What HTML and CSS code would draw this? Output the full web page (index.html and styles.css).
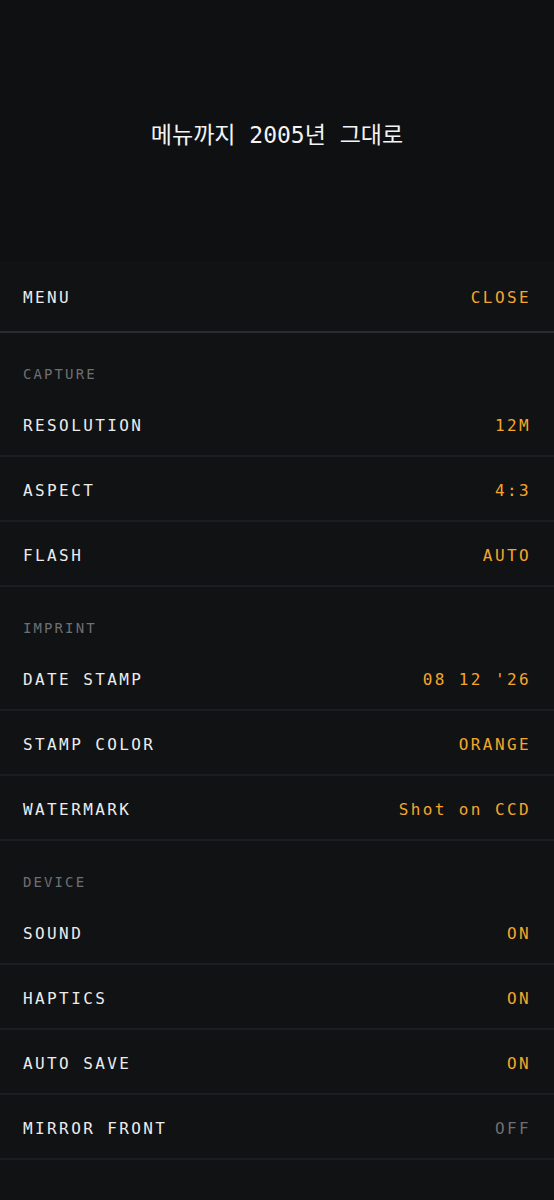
FILE: index.html
```html
<!DOCTYPE html>
<html lang="ko">
<head>
  <meta charset="UTF-8">
  <meta name="viewport" content="width=device-width, initial-scale=1.0">
  <title>메뉴</title>
  <link rel="stylesheet" href="styles.css">
</head>
<body>
  <div class="hero">
    <h1>메뉴까지 2005년 그대로</h1>
  </div>

  <div class="menu">
    <div class="menu-head">
      <span>MENU</span>
      <span class="accent">CLOSE</span>
    </div>

    <!-- CAPTURE -->
    <div class="section-label">CAPTURE</div>
    <div class="row"><span>RESOLUTION</span><span class="accent">12M</span></div>
    <div class="row"><span>ASPECT</span><span class="accent">4:3</span></div>
    <div class="row"><span>FLASH</span><span class="accent">AUTO</span></div>

    <!-- IMPRINT -->
    <div class="section-label">IMPRINT</div>
    <div class="row"><span>DATE STAMP</span><span class="accent">08 12 '26</span></div>
    <div class="row"><span>STAMP COLOR</span><span class="accent">ORANGE</span></div>
    <div class="row"><span>WATERMARK</span><span class="accent">Shot on CCD</span></div>

    <!-- DEVICE -->
    <div class="section-label">DEVICE</div>
    <div class="row"><span>SOUND</span><span class="accent">ON</span></div>
    <div class="row"><span>HAPTICS</span><span class="accent">ON</span></div>
    <div class="row"><span>AUTO SAVE</span><span class="accent">ON</span></div>
    <div class="row"><span>MIRROR FRONT</span><span class="muted">OFF</span></div>
  </div>
</body>
</html>
```

FILE: styles.css
```css
body {
  margin: 0;
  background: #111214;
  color: #ececec;
  font-family: "DejaVu Sans Mono", "Noto Sans CJK KR", monospace;
}
.hero {
  height: 261px;
  display: flex;
  align-items: center;
  justify-content: center;
  background: #0f1012;
}
.hero h1 {
  margin: 0;
  font-size: 23px;
  font-weight: normal;
  color: #f4f4f4;
  padding-top: 4px;
}
.menu-head {
  height: 72px;
  box-sizing: border-box;
  display: flex;
  align-items: center;
  justify-content: space-between;
  padding: 2px 23px 0;
  border-bottom: 2px solid #2a2b2f;
  font-size: 16px;
  letter-spacing: 0.15em;
}
.section-label {
  height: 59px;
  box-sizing: border-box;
  padding: 33px 23px 0;
  font-size: 14px;
  letter-spacing: 0.15em;
  color: #6e6f72;
}
.row {
  height: 65px;
  box-sizing: border-box;
  display: flex;
  align-items: center;
  justify-content: space-between;
  padding: 3px 23px 0;
  border-bottom: 2px solid #1c1d20;
  font-size: 16px;
  letter-spacing: 0.15em;
}
.accent {
  color: #f5a62a;
}
.muted {
  color: #6e6f72;
}
```
